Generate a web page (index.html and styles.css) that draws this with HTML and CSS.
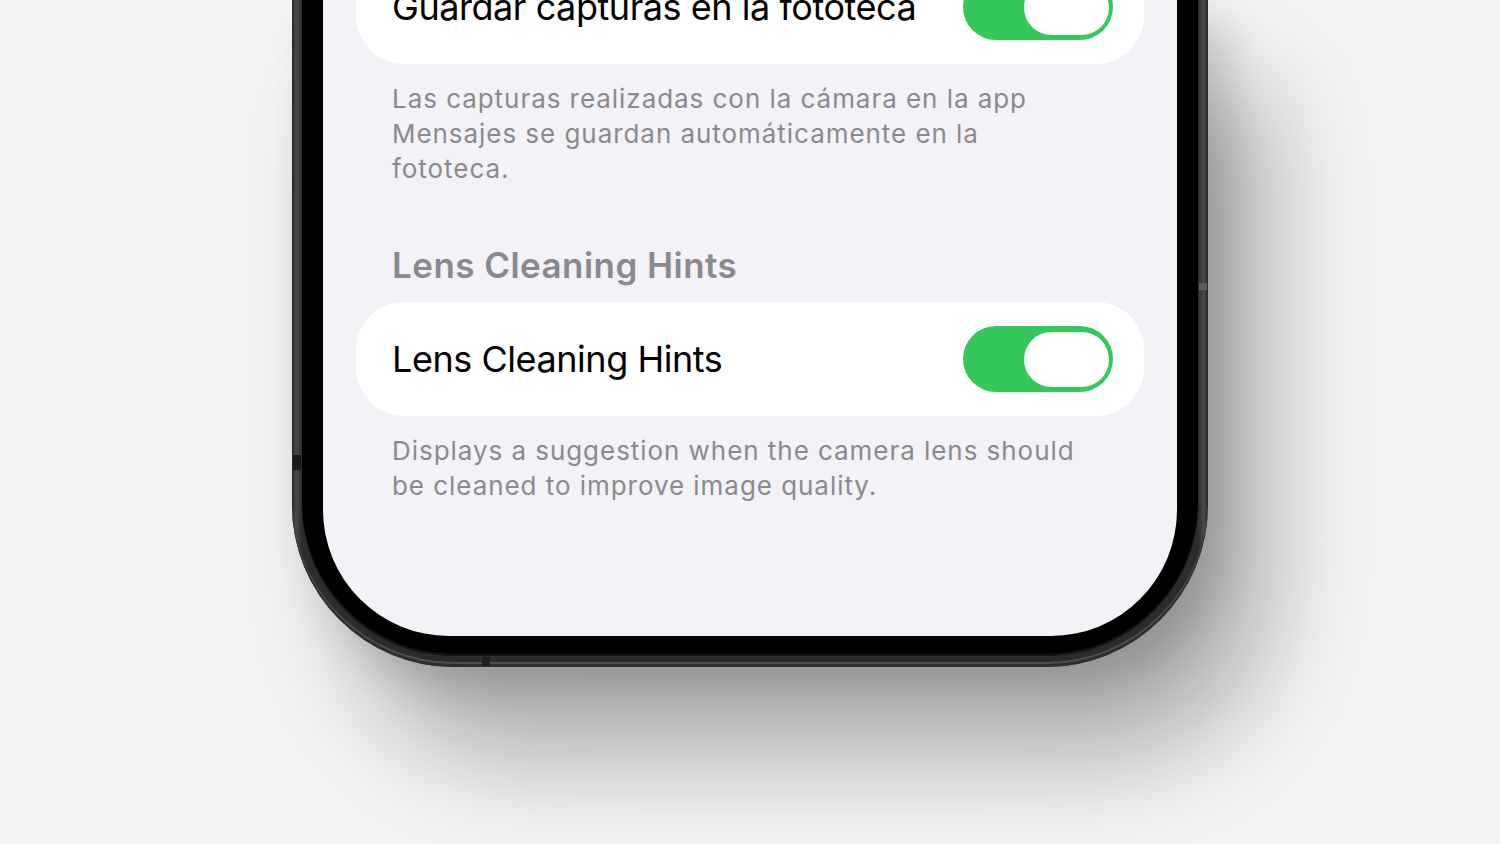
FILE: index.html
```html
<!DOCTYPE html>
<html lang="es">
<head>
    <meta charset="UTF-8">
    <meta name="viewport" content="width=device-width, initial-scale=1.0">
    <title>Ajustes de Cámara</title>
    <link rel="stylesheet" href="styles.css">
</head>
<body>
    <div class="stage">
        <div class="phone">
            <!-- antenna seams on the frame -->
            <span class="seam seam-left"></span>
            <span class="seam seam-right"></span>
            <span class="seam seam-bottom"></span>
            <div class="bezel">
                <div class="screen">
                    <div class="card card-first">
                        <span class="card-label">Guardar capturas en la fototeca</span>
                        <span class="toggle on"><span class="knob"></span></span>
                    </div>
                    <p class="footnote">Las capturas realizadas con la cámara en la app Mensajes se guardan automáticamente en la fototeca.</p>

                    <h3 class="section-title">Lens Cleaning Hints</h3>
                    <div class="card">
                        <span class="card-label">Lens Cleaning Hints</span>
                        <span class="toggle on"><span class="knob"></span></span>
                    </div>
                    <p class="footnote">Displays a suggestion when the camera lens should be cleaned to improve image quality.</p>
                </div>
            </div>
        </div>
    </div>
</body>
</html>
```

FILE: styles.css
```css
/* page */
body, html {
    margin: 0;
    padding: 0;
    height: 100%;
    overflow: hidden;
    background-color: #f4f4f4;
    font-family: 'Inter', 'Noto Sans', sans-serif;
}

.stage {
    display: flex;
    justify-content: center;
}

/* phone body: rim > black bezel > screen */
.phone {
    position: relative;
    width: 916px;
    height: 667px;
    box-sizing: border-box;
    padding: 0 10px 11px;
    background: linear-gradient(90deg,
        #262628 0, #4a4a4c 4px, #2c2c2e 10px,
        #2c2c2e calc(100% - 10px), #4a4a4c calc(100% - 4px), #262628 100%);
    border-radius: 0 0 162px 162px;
    box-shadow:
        inset 0 -3px 0 #2e2e30,
        inset 0 -5px 0 #4f4f51,
        20px 20px 40px rgba(0, 0, 0, 0.14),
        60px 90px 110px rgba(0, 0, 0, 0.3);
}

.bezel {
    position: relative;
    z-index: 1;
    height: 100%;
    box-sizing: border-box;
    padding: 0 21px 20px;
    background-color: #000;
    border-radius: 0 0 152px 152px;
    box-shadow: inset 0 -2px 0 #161616;
}

.screen {
    height: 100%;
    box-sizing: border-box;
    padding: 0 33px;
    overflow: hidden;
    background-color: #f2f2f7;
    border-radius: 0 0 126px 126px;
}

.seam {
    position: absolute;
    background-color: #5c5c5e;
    z-index: 2;
}

.seam-left {
    left: 1px;
    top: 455px;
    width: 8px;
    height: 15px;
    background-color: #1a1a1a;
}

.seam-right {
    right: 1px;
    top: 283px;
    width: 8px;
    height: 7px;
}

.seam-bottom {
    left: 190px;
    bottom: 1px;
    width: 8px;
    height: 9px;
    background-color: #1e1e1e;
}

/* settings list */
.card {
    display: flex;
    align-items: center;
    justify-content: space-between;
    height: 114px;
    padding: 0 31px 0 36px;
    background-color: #fff;
    border-radius: 48px;
}

.card-first {
    margin-top: -50px;
}

.card-label {
    font-size: 36px;
    color: #000;
    letter-spacing: -0.45px;
}

.toggle {
    display: flex;
    align-items: center;
    justify-content: flex-end;
    width: 150px;
    height: 66px;
    box-sizing: border-box;
    padding: 0 4px;
    border-radius: 33px;
    background-color: #e5e5ea;
}

.toggle.on {
    background-color: #34c759;
}

.knob {
    width: 85px;
    height: 55px;
    border-radius: 28px;
    background-color: #fff;
}

.footnote {
    margin: 17px 0 0;
    padding: 0 55px 0 36px;
    font-size: 26px;
    line-height: 35px;
    letter-spacing: 0.95px;
    color: #8a8a8e;
}

.section-title {
    margin: 58px 0 16px;
    padding-left: 36px;
    font-size: 35px;
    line-height: 42px;
    font-weight: 600;
    letter-spacing: 0.45px;
    color: #8a8a8e;
}
```
